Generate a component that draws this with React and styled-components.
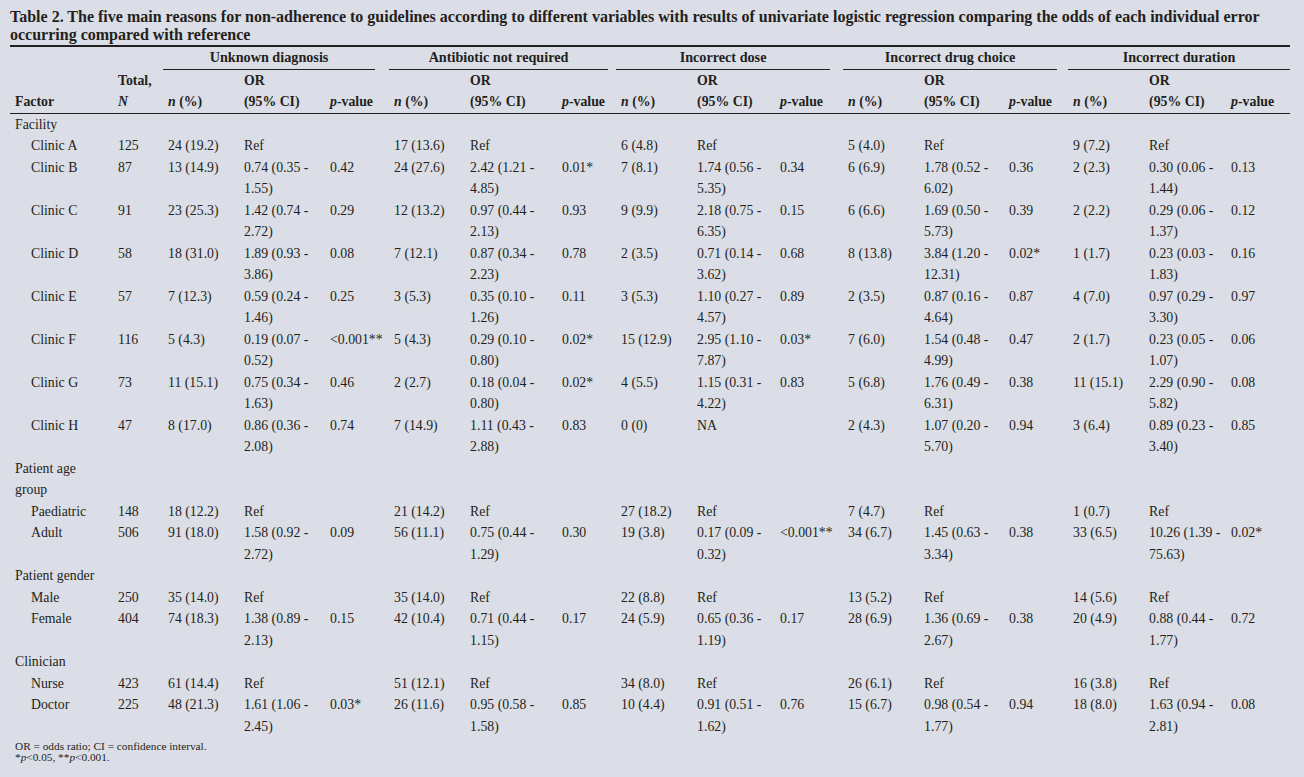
import React from 'react';
import styled, { createGlobalStyle } from 'styled-components';

const GlobalStyle = createGlobalStyle`
  html, body {
    margin: 0;
    padding: 0;
    background: #dbdee6;
  }
  body {
    font-family: "Liberation Serif", "Times New Roman", serif;
    color: #231f20;
  }
`;

const COLS = [103, 50, 76, 86, 64, 76, 92, 59, 76, 83, 68, 76, 85, 64, 76, 82, 64];

const GROUPS = [
  { name: 'Unknown diagnosis', gap: 14 },
  { name: 'Antibiotic not required', gap: 8 },
  { name: 'Incorrect dose', gap: 13 },
  { name: 'Incorrect drug choice', gap: 11 },
  { name: 'Incorrect duration', gap: 0 },
];

// label, N, then [n (%), OR (95% CI), p-value] for each of the five groups
const ROWS = [
  { label: 'Facility', section: true },
  { label: 'Clinic A', n: '125', g: [['24 (19.2)', 'Ref'], ['17 (13.6)', 'Ref'], ['6 (4.8)', 'Ref'], ['5 (4.0)', 'Ref'], ['9 (7.2)', 'Ref']] },
  { label: 'Clinic B', n: '87', g: [['13 (14.9)', '0.74 (0.35 -\n1.55)', '0.42'], ['24 (27.6)', '2.42 (1.21 -\n4.85)', '0.01*'], ['7 (8.1)', '1.74 (0.56 -\n5.35)', '0.34'], ['6 (6.9)', '1.78 (0.52 -\n6.02)', '0.36'], ['2 (2.3)', '0.30 (0.06 -\n1.44)', '0.13']] },
  { label: 'Clinic C', n: '91', g: [['23 (25.3)', '1.42 (0.74 -\n2.72)', '0.29'], ['12 (13.2)', '0.97 (0.44 -\n2.13)', '0.93'], ['9 (9.9)', '2.18 (0.75 -\n6.35)', '0.15'], ['6 (6.6)', '1.69 (0.50 -\n5.73)', '0.39'], ['2 (2.2)', '0.29 (0.06 -\n1.37)', '0.12']] },
  { label: 'Clinic D', n: '58', g: [['18 (31.0)', '1.89 (0.93 -\n3.86)', '0.08'], ['7 (12.1)', '0.87 (0.34 -\n2.23)', '0.78'], ['2 (3.5)', '0.71 (0.14 -\n3.62)', '0.68'], ['8 (13.8)', '3.84 (1.20 -\n12.31)', '0.02*'], ['1 (1.7)', '0.23 (0.03 -\n1.83)', '0.16']] },
  { label: 'Clinic E', n: '57', g: [['7 (12.3)', '0.59 (0.24 -\n1.46)', '0.25'], ['3 (5.3)', '0.35 (0.10 -\n1.26)', '0.11'], ['3 (5.3)', '1.10 (0.27 -\n4.57)', '0.89'], ['2 (3.5)', '0.87 (0.16 -\n4.64)', '0.87'], ['4 (7.0)', '0.97 (0.29 -\n3.30)', '0.97']] },
  { label: 'Clinic F', n: '116', g: [['5 (4.3)', '0.19 (0.07 -\n0.52)', '<0.001**'], ['5 (4.3)', '0.29 (0.10 -\n0.80)', '0.02*'], ['15 (12.9)', '2.95 (1.10 -\n7.87)', '0.03*'], ['7 (6.0)', '1.54 (0.48 -\n4.99)', '0.47'], ['2 (1.7)', '0.23 (0.05 -\n1.07)', '0.06']] },
  { label: 'Clinic G', n: '73', g: [['11 (15.1)', '0.75 (0.34 -\n1.63)', '0.46'], ['2 (2.7)', '0.18 (0.04 -\n0.80)', '0.02*'], ['4 (5.5)', '1.15 (0.31 -\n4.22)', '0.83'], ['5 (6.8)', '1.76 (0.49 -\n6.31)', '0.38'], ['11 (15.1)', '2.29 (0.90 -\n5.82)', '0.08']] },
  { label: 'Clinic H', n: '47', g: [['8 (17.0)', '0.86 (0.36 -\n2.08)', '0.74'], ['7 (14.9)', '1.11 (0.43 -\n2.88)', '0.83'], ['0 (0)', 'NA'], ['2 (4.3)', '1.07 (0.20 -\n5.70)', '0.94'], ['3 (6.4)', '0.89 (0.23 -\n3.40)', '0.85']] },
  { label: 'Patient age\ngroup', section: true },
  { label: 'Paediatric', n: '148', g: [['18 (12.2)', 'Ref'], ['21 (14.2)', 'Ref'], ['27 (18.2)', 'Ref'], ['7 (4.7)', 'Ref'], ['1 (0.7)', 'Ref']] },
  { label: 'Adult', n: '506', g: [['91 (18.0)', '1.58 (0.92 -\n2.72)', '0.09'], ['56 (11.1)', '0.75 (0.44 -\n1.29)', '0.30'], ['19 (3.8)', '0.17 (0.09 -\n0.32)', '<0.001**'], ['34 (6.7)', '1.45 (0.63 -\n3.34)', '0.38'], ['33 (6.5)', '10.26 (1.39 -\n75.63)', '0.02*']] },
  { label: 'Patient gender', section: true },
  { label: 'Male', n: '250', g: [['35 (14.0)', 'Ref'], ['35 (14.0)', 'Ref'], ['22 (8.8)', 'Ref'], ['13 (5.2)', 'Ref'], ['14 (5.6)', 'Ref']] },
  { label: 'Female', n: '404', g: [['74 (18.3)', '1.38 (0.89 -\n2.13)', '0.15'], ['42 (10.4)', '0.71 (0.44 -\n1.15)', '0.17'], ['24 (5.9)', '0.65 (0.36 -\n1.19)', '0.17'], ['28 (6.9)', '1.36 (0.69 -\n2.67)', '0.38'], ['20 (4.9)', '0.88 (0.44 -\n1.77)', '0.72']] },
  { label: 'Clinician', section: true },
  { label: 'Nurse', n: '423', g: [['61 (14.4)', 'Ref'], ['51 (12.1)', 'Ref'], ['34 (8.0)', 'Ref'], ['26 (6.1)', 'Ref'], ['16 (3.8)', 'Ref']] },
  { label: 'Doctor', n: '225', g: [['48 (21.3)', '1.61 (1.06 -\n2.45)', '0.03*'], ['26 (11.6)', '0.95 (0.58 -\n1.58)', '0.85'], ['10 (4.4)', '0.91 (0.51 -\n1.62)', '0.76'], ['15 (6.7)', '0.98 (0.54 -\n1.77)', '0.94'], ['18 (8.0)', '1.63 (0.94 -\n2.81)', '0.08']] },
];

function App() {
  return (
    <Page>
      <GlobalStyle />
      <Caption>
        Table 2. The five main reasons for non-adherence to guidelines according to different variables with results of univariate logistic regression comparing the odds of each individual error
        <br />
        occurring compared with reference
      </Caption>
      <Table>
        <colgroup>
          {COLS.map((w, i) => <col key={i} style={{ width: w }} />)}
        </colgroup>
        <thead>
          <tr>
            <Th />
            <Th />
            {GROUPS.map((grp) => (
              <Th key={grp.name} colSpan={3}>
                <GroupLine $gap={grp.gap}>{grp.name}</GroupLine>
              </Th>
            ))}
          </tr>
          <tr>
            <Th />
            <Th>Total,</Th>
            {GROUPS.map((grp) => (
              <React.Fragment key={grp.name}>
                <Th />
                <Th>OR</Th>
                <Th />
              </React.Fragment>
            ))}
          </tr>
          <LastHeadRow>
            <Th>Factor</Th>
            <Th><i>N</i></Th>
            {GROUPS.map((grp) => (
              <React.Fragment key={grp.name}>
                <Th><i>n</i> (%)</Th>
                <Th>(95% CI)</Th>
                <Th><i>p</i>-value</Th>
              </React.Fragment>
            ))}
          </LastHeadRow>
        </thead>
        <tbody>
          {ROWS.map((row) =>
            row.section ? (
              <tr key={row.label}>
                <Td>{row.label}</Td>
                <Td colSpan={16} />
              </tr>
            ) : (
              <tr key={row.label}>
                <Td $indent>{row.label}</Td>
                <Td>{row.n}</Td>
                {row.g.map((cell, i) => (
                  <React.Fragment key={i}>
                    <Td>{cell[0]}</Td>
                    <Td>{cell[1]}</Td>
                    <Td>{cell[2] || ''}</Td>
                  </React.Fragment>
                ))}
              </tr>
            )
          )}
        </tbody>
      </Table>
      <Notes>
        OR = odds ratio; CI = confidence interval.
        <br />
        *<i>p</i>&lt;0.05, **<i>p</i>&lt;0.001.
      </Notes>
    </Page>
  );
}

const Page = styled.div`
  padding: 8px 14px 0 10px;
  width: 1280px;
`;

const Caption = styled.div`
  font-size: 16px;
  font-weight: bold;
  line-height: 18px;
  margin-bottom: 1px;
  white-space: nowrap;
`;

const Table = styled.table`
  width: 1280px;
  table-layout: fixed;
  border-collapse: collapse;
  border-top: 2px solid #231f20;
  font-size: 13.8px;
  line-height: 21.5px;
`;

const Th = styled.th`
  text-align: left;
  font-weight: bold;
  padding: 0 0 0 5px;
  vertical-align: top;
  white-space: nowrap;
`;

const LastHeadRow = styled.tr`
  border-bottom: 1px solid #231f20;
`;

const GroupLine = styled.div`
  text-align: center;
  margin-left: -5px;
  margin-right: ${(p) => p.$gap}px;
  border-bottom: 1px solid #231f20;
  font-size: 14.2px;
`;

const Td = styled.td`
  padding: 0 0 0 ${(p) => (p.$indent ? 21 : 5)}px;
  vertical-align: top;
  white-space: pre-line;
`;

const Notes = styled.div`
  font-size: 11.3px;
  line-height: 11px;
  margin-top: 4px;
  padding-left: 5px;
`;

export default App;
